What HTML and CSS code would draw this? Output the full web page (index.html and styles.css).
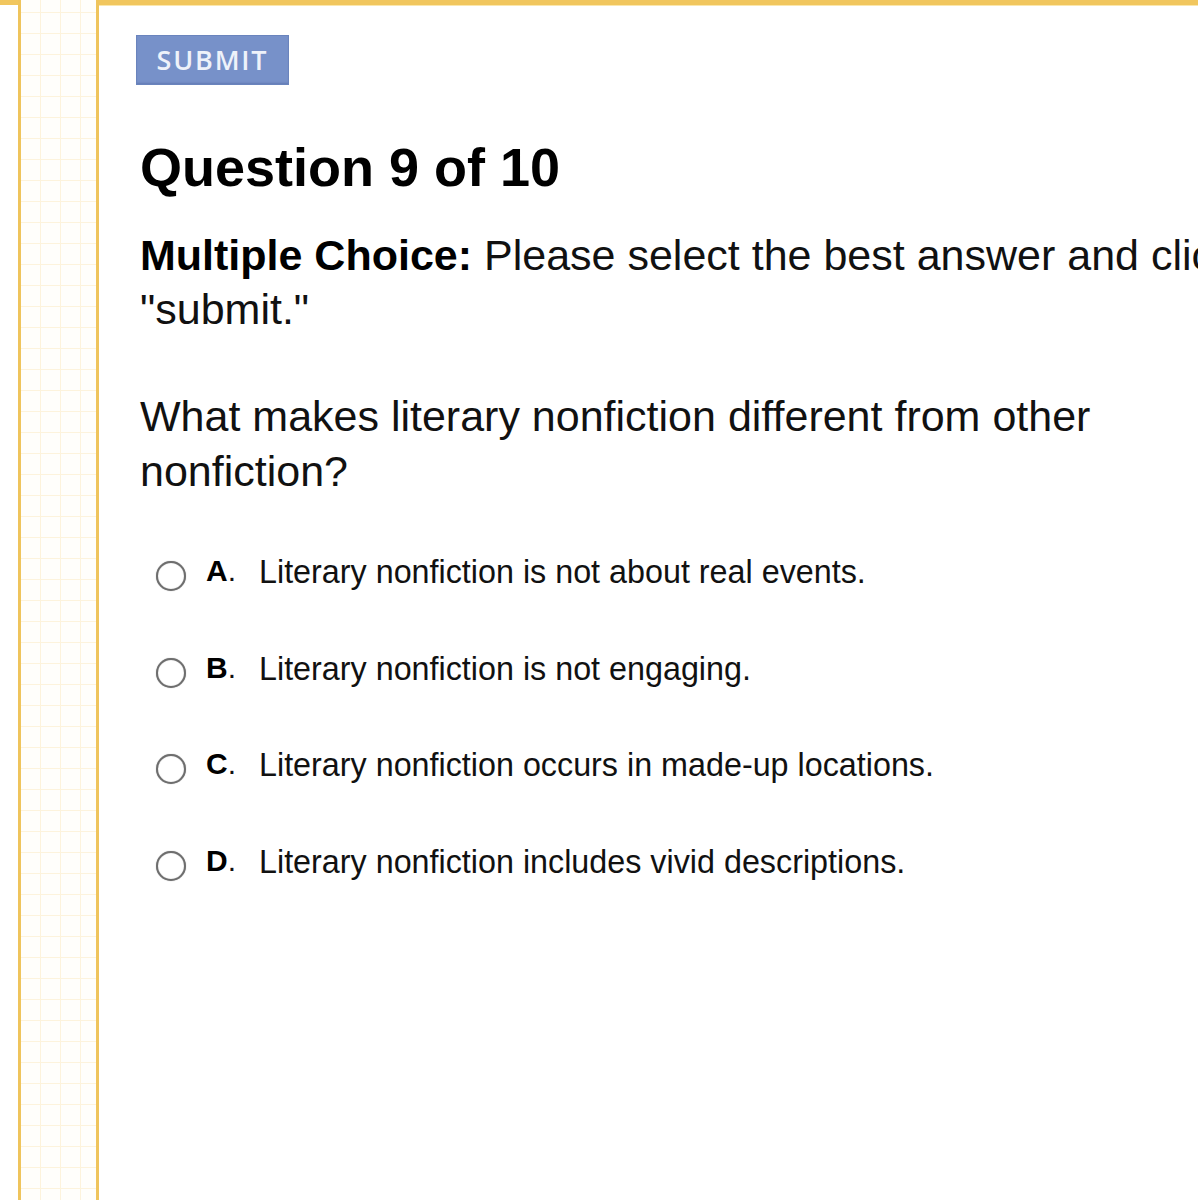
FILE: index.html
```html
<!DOCTYPE html>
<html>
<head>
<meta charset="utf-8">
<link rel="stylesheet" href="styles.css">
</head>
<body>
<div class="page">
  <div class="edge"></div>
  <div class="rail"></div>
  <main class="main">
    <div class="content">
      <button class="submit">SUBMIT</button>
      <h1 class="title">Question 9 of 10</h1>
      <p class="instructions"><strong>Multiple Choice:</strong> Please select the best answer and click "submit."</p>
      <p class="question">What makes literary nonfiction different from other nonfiction?</p>
      <ul class="options">
        <li class="option"><span class="radio"></span><span class="letter"><b>A</b>.</span><span class="text">Literary nonfiction is not about real events.</span></li>
        <li class="option"><span class="radio"></span><span class="letter"><b>B</b>.</span><span class="text">Literary nonfiction is not engaging.</span></li>
        <li class="option"><span class="radio"></span><span class="letter"><b>C</b>.</span><span class="text">Literary nonfiction occurs in made-up locations.</span></li>
        <li class="option"><span class="radio"></span><span class="letter"><b>D</b>.</span><span class="text">Literary nonfiction includes vivid descriptions.</span></li>
      </ul>
    </div>
  </main>
</div>
</body>
</html>
```

FILE: styles.css
```css
html, body {
  margin: 0;
  padding: 0;
  background: #ffffff;
  overflow: hidden;
}

.page {
  display: flex;
  width: 1198px;
  height: 1200px;
  font-family: "Liberation Sans", Arial, sans-serif;
  color: #111;
}

.edge {
  width: 18px;
  flex: none;
  border-top: 5px solid #f1c65e;
  box-sizing: border-box;
}

.rail {
  width: 81px;
  flex: none;
  box-sizing: border-box;
  border-left: 3px solid #efc45c;
  border-right: 3px solid #efc45c;
  background-color: #fffefb;
  background-image:
    linear-gradient(to right, #fdf3dc 1px, transparent 1px),
    linear-gradient(to bottom, #fdf3dc 1px, transparent 1px);
  background-size: 20px 21px;
  background-position: -1px 12px;
}

.main {
  flex: 1;
  min-width: 0;
  overflow: hidden;
  border-top: 5px solid #f1c65e;
  box-shadow: inset 0 1px 0 #fbe7ad;
}

.content {
  width: 1130px;
  padding: 30px 0 0 41px;
}

.submit {
  display: block;
  margin: 0 0 0 -4px;
  width: 153px;
  height: 50px;
  padding: 0;
  border: none;
  background: #7791c9;
  box-shadow: inset 0 0 0 1px #6a84bd, inset 0 -2px 2px rgba(60, 80, 140, 0.35);
  color: #eef2fa;
  font-family: "Open Sans", "DejaVu Sans", sans-serif;
  font-size: 27px;
  font-weight: 600;
  letter-spacing: 1.8px;
  line-height: 46px;
}

.title {
  margin: 51px 0 0;
  font-size: 54px;
  line-height: 62px;
  font-weight: 700;
  color: #000;
}

.instructions {
  margin: 30px 0 0;
  font-size: 43px;
  line-height: 54px;
  color: #111;
}

.instructions strong {
  font-weight: 700;
  color: #000;
}

.question {
  margin: 53px 0 0;
  font-size: 43px;
  line-height: 55px;
  color: #111;
}

.options {
  list-style: none;
  margin: 55px 0 0;
  padding: 0;
  display: flex;
  flex-direction: column;
  gap: 60.5px;
}

.option {
  display: flex;
  align-items: baseline;
  height: 36px;
  line-height: 36px;
}

.radio {
  flex: none;
  align-self: flex-start;
  width: 26px;
  height: 26px;
  margin: 7px 0 0 16px;
  border: 2.5px solid #6e6e6e;
  border-radius: 50%;
  box-shadow: 0 0 1px rgba(0,0,0,0.4), inset 0 0 1px rgba(0,0,0,0.3);
  background: #fff;
}

.letter {
  flex: none;
  margin-left: 20px;
  width: 53px;
  font-size: 30px;
  position: relative;
  top: -2px;
  color: #111;
}

.letter b {
  font-weight: 700;
  color: #000;
}

.text {
  font-size: 32.3px;
  color: #111;
}
```
